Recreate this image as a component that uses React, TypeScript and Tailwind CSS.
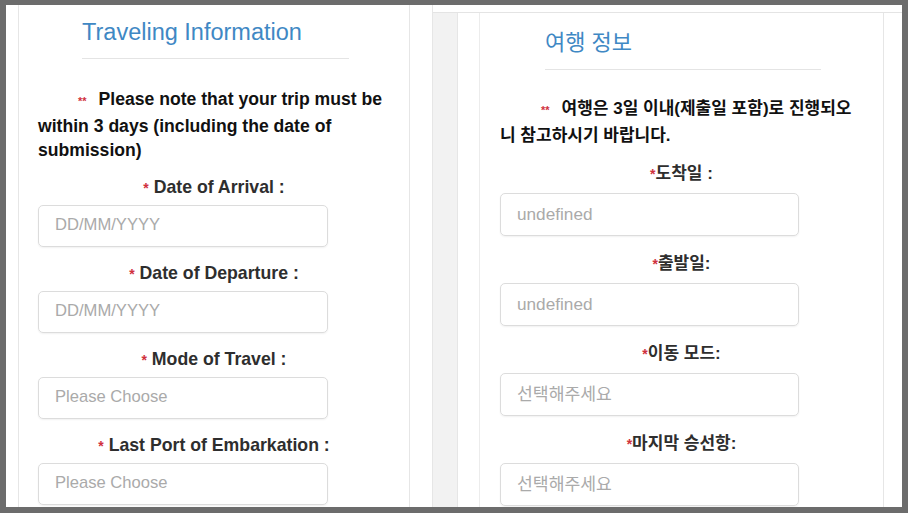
const FONT = "font-['Liberation_Sans','Noto_Sans_CJK_KR',sans-serif]";

function Field({ label, placeholder, first, ko }: { label: string; placeholder: string; first?: boolean; ko?: boolean }) {
  const gap = ko ? (first ? "mt-[14px]" : "mt-[16px]") : first ? "mt-[12px]" : "mt-[14px]";
  return (
    <div className={gap}>
      <div className={`h-[24px] text-center font-bold leading-[24px] text-[#2e2e2e] ${ko ? "text-[17px]" : "text-[17.7px]"}`}>
        <span className="text-[14px] text-[#d0313d]">*</span>
        {ko ? "" : " "}
        {label}
      </div>
      <div
        className={`${ko ? "mt-[7px] h-[43px] w-[299px] text-[17.2px]" : "mt-[6px] h-[42px] w-[290px] text-[16.6px]"} flex items-center rounded-[5px] border border-[#dcdcdc] px-[16px] text-[#aaa] shadow-[0_1px_2px_rgba(0,0,0,0.06)]`}
      >
        {placeholder}
      </div>
    </div>
  );
}

function LeftPanel() {
  return (
    <div className="w-[391px] shrink-0 border-r border-[#e6e6e6] px-[19px]">
      <div className="ml-[44px] w-[267px] border-b border-[#e4e4e4] pt-[12px] pb-[11px]">
        <div className="h-[30px] text-[23.5px] leading-[30px] text-[#3f88c4]">Traveling Information</div>
      </div>
      <p className="mt-[28px] indent-[40px] text-[17.6px] font-bold leading-[24.5px] text-[#111]">
        <span className="mr-[12px] text-[11px] text-[#d0313d]">**</span>Please note that your trip must be within 3 days (including
        the date of submission)
      </p>
      <Field first label="Date of Arrival :" placeholder="DD/MM/YYYY" />
      <Field label="Date of Departure :" placeholder="DD/MM/YYYY" />
      <Field label="Mode of Travel :" placeholder="Please Choose" />
      <Field label="Last Port of Embarkation :" placeholder="Please Choose" />
    </div>
  );
}

function RightPanel() {
  return (
    <div className="w-[404px] shrink-0 border-r border-[#e6e6e6] px-[20px]">
      <div className="ml-[45px] w-[276px] border-b border-[#e4e4e4] pt-[15px] pb-[11px]">
        <div className="h-[30px] text-[22px] leading-[30px] text-[#3f88c4]">여행 정보</div>
      </div>
      <p className="mt-[26px] indent-[41px] text-[17px] font-bold leading-[25px] text-[#111]">
        <span className="mr-[12px] text-[11px] text-[#d0313d]">**</span>여행은 3일 이내(제출일 포함)로 진행되오니 참고하시기 바랍니다.
      </p>
      <Field ko first label="도착일 :" placeholder="undefined" />
      <Field ko label="출발일:" placeholder="undefined" />
      <Field ko label="이동 모드:" placeholder="선택해주세요" />
      <Field ko label="마지막 승선항:" placeholder="선택해주세요" />
    </div>
  );
}

export default function App() {
  return (
    <div className={`${FONT} h-[513px] w-[908px] overflow-hidden bg-[#6c6c6c] pt-[5px] pr-[6px] pb-[6px] pl-[6px]`}>
      <div className="flex h-full overflow-hidden bg-white">
        <div className="w-[13px] shrink-0 border-r border-[#e6e6e6]" />
        <LeftPanel />
        <div className="w-[23px] shrink-0 border-r border-[#e6e6e6]" />
        <div className="flex min-w-0 flex-1 flex-col">
          <div className="h-[7px] shrink-0" />
          <div className="flex flex-1 border-t border-[#e4e4e4]">
            <div className="w-[25px] shrink-0 border-r border-[#e6e6e6] bg-[#f2f2f2]" />
            <div className="w-[22px] shrink-0 border-r border-[#ececec]" />
            <RightPanel />
            <div className="flex-1" />
          </div>
        </div>
      </div>
    </div>
  );
}
